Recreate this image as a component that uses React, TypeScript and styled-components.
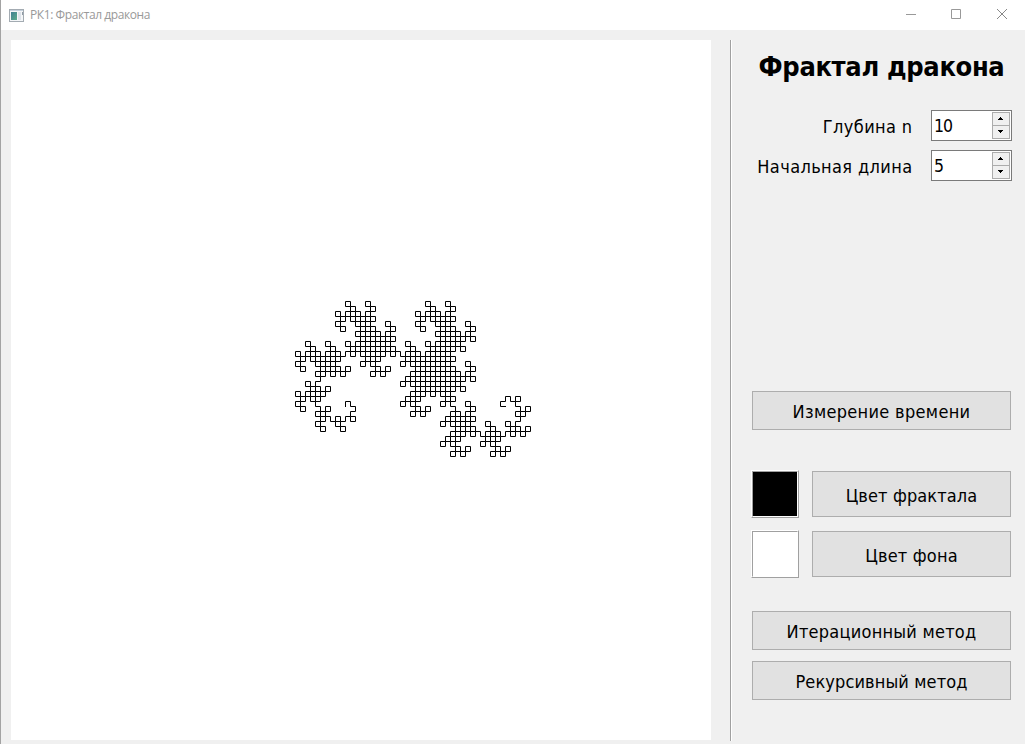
import React, { useState } from "react";
import styled, { createGlobalStyle } from "styled-components";

const GlobalStyle = createGlobalStyle`
  *, *::before { box-sizing: border-box; }
  body { margin: 0; background: #f0f0f0; overflow: hidden; }
`;

const Window = styled.div`
  display: flex;
  flex-direction: column;
  width: 1025px;
  height: 744px;
  border-left: 1px solid #a3a3a3;
  background: #f0f0f0;
  color: #000;
  font-family: "DejaVu Sans Condensed", "DejaVu Sans", sans-serif;
  font-stretch: condensed;
`;

const TitleBar = styled.header`
  display: flex;
  align-items: center;
  height: 30px;
  flex: none;
  padding-left: 8px;
  background: #fff;
`;

const Caption = styled.span`
  flex: 1;
  margin-left: 6px;
  font: 12px/30px "Open Sans", sans-serif;
  letter-spacing: -0.42px;
  color: #999;
`;

const WindowControl = styled.span`
  display: flex;
  justify-content: center;
  align-items: center;
  width: 46px;
  height: 30px;
`;

const Controls = styled.div`
  display: flex;
`;

const Content = styled.main`
  display: flex;
  flex: 1;
  padding: 10px 13px 0 10px;
`;

const Canvas = styled.div`
  width: 700px;
  height: 700px;
  background: #fff;
  svg { display: block; }
`;

const Divider = styled.div`
  width: 2px;
  height: 701px;
  margin-left: 19px;
  border-left: 1px solid #a0a0a0;
  border-right: 1px solid #fff;
`;

const Sidebar = styled.aside`
  display: flex;
  flex-direction: column;
  flex: 1;
  margin-left: 19px;
`;

const Heading = styled.h1`
  margin: 0;
  height: 70px;
  font-size: 27px;
  line-height: 53px;
  font-weight: bold;
  letter-spacing: -0.33px;
  text-align: center;
  white-space: nowrap;
`;

const Field = styled.div`
  display: flex;
  justify-content: flex-end;
  align-items: center;
  height: 31px;
  margin-bottom: 9px;
  font-size: 18px;
  white-space: nowrap;
`;

const FieldLabel = styled.span`
  margin-right: 18.5px;
  padding-top: 1px;
  letter-spacing: 0.38px;
`;

const SpinBox = styled.span`
  display: flex;
  width: 81px;
  height: 31px;
  padding: 1px;
  border: 1px solid #7a7a7a;
  background: #fff;
`;

const SpinValue = styled.span`
  flex: 1;
  padding-left: 1px;
  font-size: 17.5px;
  line-height: 29px;
  letter-spacing: -0.9px;
`;

const SpinButtons = styled.span`
  display: flex;
  flex-direction: column;
  width: 18px;
`;

const SpinButton = styled.button`
  display: flex;
  align-items: center;
  justify-content: center;
  height: 14px;
  padding: 0 0 1px;
  border: 1px solid #acacac;
  background: #f0f0f0;
  & + & { margin-top: -1px; }
`;

const Button = styled.button<{ $height?: number; $spacing?: number }>`
  flex: 1 0 auto;
  height: ${(p) => p.$height ?? 39}px;
  padding: 2px 0 0;
  border: 1px solid #adadad;
  background: #e1e1e1;
  color: #000;
  font: inherit;
  font-size: 18px;
  line-height: 24px;
  letter-spacing: ${(p) => p.$spacing ?? 0}px;
`;

const ColorButton = styled(Button)`
  height: 46px;
  padding-top: 3px;
`;

const ButtonRow = styled.div<{ $top: number }>`
  display: flex;
  margin: ${(p) => p.$top}px 1px 0 1px;
`;

const ColorRow = styled.div<{ $top: number }>`
  display: flex;
  align-items: center;
  gap: 13px;
  height: 48px;
  margin: ${(p) => p.$top}px 1px 0 0;
`;

const Swatch = styled.div<{ $color: string }>`
  width: 48px;
  height: 48px;
  border: 1px solid;
  border-color: #fff #a0a0a0 #a0a0a0 #fff;
  &::before {
    content: "";
    display: block;
    height: 46px;
    border: 1px solid;
    border-color: #a0a0a0 #fff #fff #a0a0a0;
    background: ${(p) => p.$color};
  }
`;

function dragonPath(depth: number, length: number, startX: number, startY: number) {
  let x = startX;
  let y = startY;
  let dx = 0;
  let dy = -length;
  let d = `M${x} ${y}`;
  for (let i = 1; i <= 2 ** depth; i++) {
    x += dx;
    y += dy;
    d += `L${x} ${y}`;
    const left = (((i & -i) << 1) & i) !== 0;
    [dx, dy] = left ? [dy, -dx] : [-dy, dx];
  }
  return d;
}

function Spin({ value, onChange }: { value: number; onChange: (v: number) => void }) {
  return (
    <SpinBox>
      <SpinValue>{value}</SpinValue>
      <SpinButtons>
        <SpinButton onClick={() => onChange(value + 1)}>
          <svg width="6" height="3" shapeRendering="crispEdges"><path d="M2 0h1v1h1v1h1v1H0V2h1V1h1z" /></svg>
        </SpinButton>
        <SpinButton onClick={() => onChange(Math.max(1, value - 1))}>
          <svg width="6" height="3" shapeRendering="crispEdges"><path d="M0 0h5v1H4v1H3v1H2V2H1V1H0z" /></svg>
        </SpinButton>
      </SpinButtons>
    </SpinBox>
  );
}

export default function App() {
  const [depth, setDepth] = useState(10);
  const [length, setLength] = useState(5);
  return (
    <>
      <GlobalStyle />
      <Window>
        <TitleBar>
          <svg width="15" height="13" shapeRendering="crispEdges">
            <defs>
              <linearGradient id="pane" x1="0" y1="0" x2="1" y2="1">
                <stop offset="0" stopColor="#3f7f93" />
                <stop offset="1" stopColor="#5bab8b" />
              </linearGradient>
            </defs>
            <rect x=".5" y=".5" width="14" height="12" fill="#f4f6f8" stroke="#a3abb2" />
            <rect x="1" y="1" width="13" height="1" fill="#c4d0dc" />
            <rect x="2" y="3" width="6" height="8" fill="url(#pane)" />
            <rect x="9" y="3" width="3" height="8" fill="#dde3ea" />
            <rect x="13" y="3" width="1" height="3" fill="#8f9ba6" />
          </svg>
          <Caption>РК1: Фрактал дракона</Caption>
          <Controls>
            <WindowControl>
              <svg width="12" height="11"><path d="M2 4.5h10" stroke="#999" /></svg>
            </WindowControl>
            <WindowControl>
              <svg width="10" height="12"><path d="M.5 .5h9v9h-9z" fill="none" stroke="#999" /></svg>
            </WindowControl>
            <WindowControl>
              <svg width="10" height="12"><path d="M0 0l10 10M10 0L0 10" stroke="#888" /></svg>
            </WindowControl>
          </Controls>
        </TitleBar>
        <Content>
          <Canvas>
            <svg width="700" height="700">
              <path d={dragonPath(depth, length, 334.5, 366.5)} fill="none" stroke="#000" strokeLinecap="square" />
            </svg>
          </Canvas>
          <Divider />
          <Sidebar>
            <Heading>Фрактал дракона</Heading>
            <Field>
              <FieldLabel>Глубина n</FieldLabel>
              <Spin value={depth} onChange={setDepth} />
            </Field>
            <Field>
              <FieldLabel>Начальная длина</FieldLabel>
              <Spin value={length} onChange={setLength} />
            </Field>
            <ButtonRow $top={201}><Button $spacing={0.32}>Измерение времени</Button></ButtonRow>
            <ColorRow $top={40}>
              <Swatch $color="#000" />
              <ColorButton $spacing={0.12}>Цвет фрактала</ColorButton>
            </ColorRow>
            <ColorRow $top={12}>
              <Swatch $color="#fff" />
              <ColorButton $spacing={0.2}>Цвет фона</ColorButton>
            </ColorRow>
            <ButtonRow $top={33}><Button $spacing={0.24}>Итерационный метод</Button></ButtonRow>
            <ButtonRow $top={11}><Button $spacing={0.12}>Рекурсивный метод</Button></ButtonRow>
          </Sidebar>
        </Content>
      </Window>
    </>
  );
}
